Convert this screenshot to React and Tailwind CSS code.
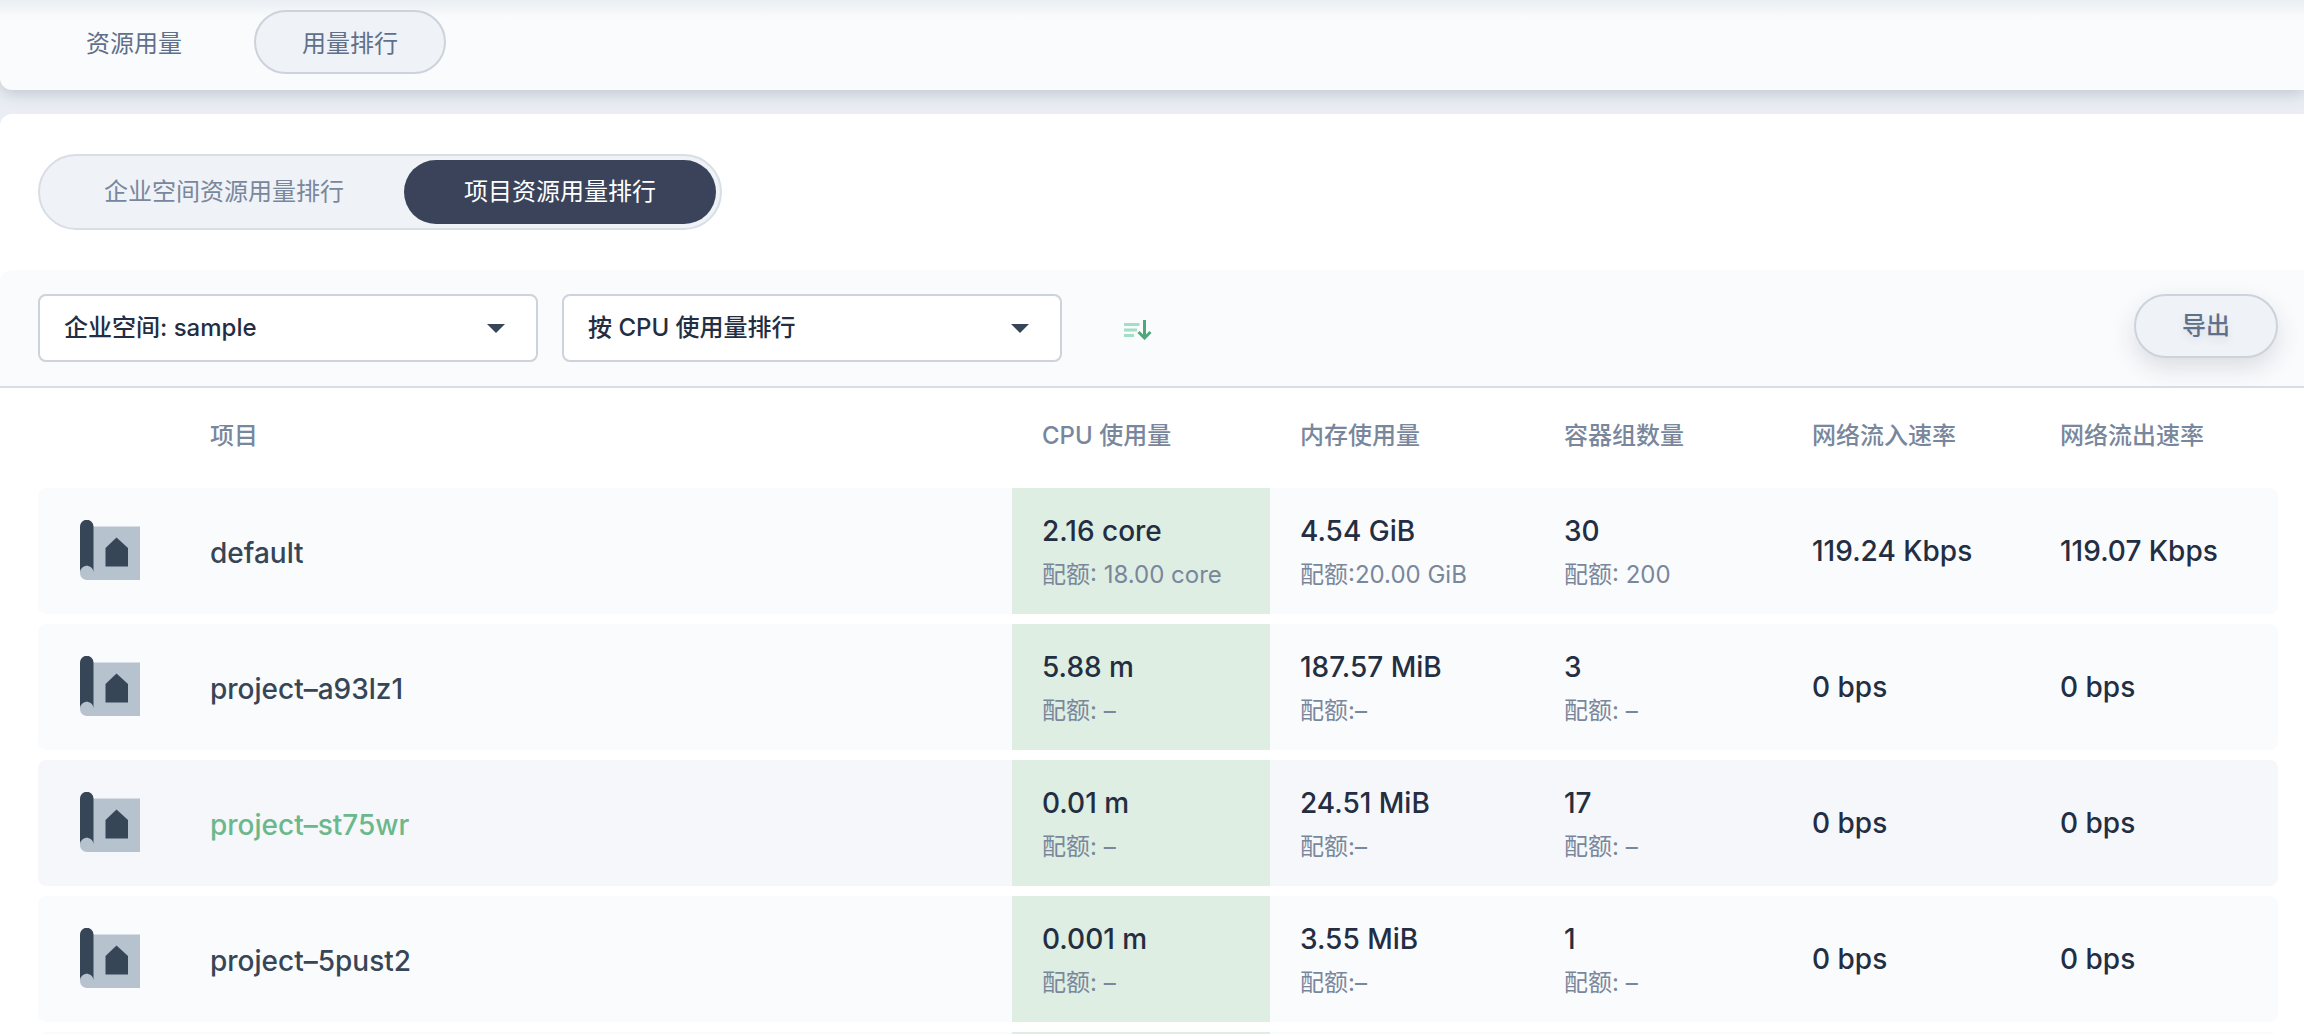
import React, { useState } from 'react';

const TABS = ['资源用量', '用量排行'];

const RANK_TYPES = ['企业空间资源用量排行', '项目资源用量排行'];

const METRICS = ['CPU 使用量', '内存使用量', '容器组数量', '网络流入速率', '网络流出速率'];

const PROJECTS = [
  {
    name: 'default',
    cpu: '2.16 core',
    cpuQuota: ' 18.00 core',
    memory: '4.54 GiB',
    memoryQuota: '20.00 GiB',
    pods: '30',
    podsQuota: ' 200',
    netIn: '119.24 Kbps',
    netOut: '119.07 Kbps',
  },
  {
    name: 'project–a93lz1',
    cpu: '5.88 m',
    cpuQuota: ' –',
    memory: '187.57 MiB',
    memoryQuota: '–',
    pods: '3',
    podsQuota: ' –',
    netIn: '0 bps',
    netOut: '0 bps',
  },
  {
    name: 'project–st75wr',
    active: true,
    cpu: '0.01 m',
    cpuQuota: ' –',
    memory: '24.51 MiB',
    memoryQuota: '–',
    pods: '17',
    podsQuota: ' –',
    netIn: '0 bps',
    netOut: '0 bps',
  },
  {
    name: 'project–5pust2',
    cpu: '0.001 m',
    cpuQuota: ' –',
    memory: '3.55 MiB',
    memoryQuota: '–',
    pods: '1',
    podsQuota: ' –',
    netIn: '0 bps',
    netOut: '0 bps',
  },
];

const ProjectIcon = () => (
  <svg className="block size-[60px]" viewBox="0 0 60 60" aria-hidden="true">
    <path fill="#b6c2cd" d="M13 6.5h47V60H7a7 7 0 0 1-7-7V46h13z" />
    <path fill="#364656" d="M0 6.5a6.5 6.5 0 0 1 13.5 0V53a6.75 6.75 0 0 0-13.5-1z" />
    <path fill="#364656" d="M25.5 28 36.5 17.5 48 28v18.5H25.5z" />
  </svg>
);

const SortIcon = () => (
  <svg className="block h-5 w-7" viewBox="0 0 28 20" fill="none" aria-hidden="true">
    <path stroke="#a2dfc4" strokeWidth="3" d="M0 4.5h15.5M0 10h13M0 15.5h10" />
    <path stroke="#4ca97a" strokeWidth="3" d="M20.5 0v17M14.5 12l6 6 6-6" />
  </svg>
);

const Select = ({ label, children }) => (
  <div className="relative w-[500px]">
    <select
      aria-label={label}
      className="h-[68px] w-full appearance-none rounded-lg border-2 border-[#ccd3db] bg-white px-6 text-2xl font-medium text-[#242e42] outline-none"
    >
      {children}
    </select>
    <svg
      className="pointer-events-none absolute right-[33px] top-[30px] h-[9px] w-[18px]"
      viewBox="0 0 18 9"
      aria-hidden="true"
    >
      <path fill="#364656" d="M0 0h18L9 9z" />
    </svg>
  </div>
);

const Metric = ({ value, quota, highlight }) => (
  <td className={`px-[30px] ${quota ? 'pt-1' : ''} ${highlight ? 'bg-[#deeee3]' : ''}`}>
    <p className="text-[28px] font-medium leading-10 text-[#242e42]">{value}</p>
    {quota && <p className="mt-1 text-2xl leading-10 text-[#79879c]">配额:{quota}</p>}
  </td>
);

const App = () => {
  const [tab, setTab] = useState(TABS[1]);
  const [rankType, setRankType] = useState(RANK_TYPES[1]);

  return (
    <div className="h-screen overflow-hidden bg-[#eaeef4] font-['Inter','Noto_Sans_CJK_SC',sans-serif]">
      <nav className="flex h-[90px] gap-6 rounded-bl-xl bg-[#fafbfd] bg-linear-to-b from-[#eaeef2] to-[#fafbfd] to-[18px] pl-[38px] pt-[10px] shadow-[0_4px_16px_rgba(36,46,66,0.2)]">
        {TABS.map((name) => (
          <button
            key={name}
            type="button"
            onClick={() => setTab(name)}
            className={`h-16 rounded-full border-2 px-[46px] pt-1 text-2xl text-[#5f708a] ${
              name === tab ? 'border-[#ccd3db] bg-[#eff2f7]' : 'border-transparent'
            }`}
          >
            {name}
          </button>
        ))}
      </nav>

      <main className="mt-6 rounded-tl-xl bg-white pt-10">
        <div className="ml-[38px] flex w-fit rounded-full border-2 border-[#d8dee5] bg-[#eff2f7] p-1">
          {RANK_TYPES.map((name) => (
            <button
              key={name}
              type="button"
              onClick={() => setRankType(name)}
              className={`h-16 rounded-full px-[60px] text-2xl ${
                name === rankType ? 'bg-[#3a435a] text-white' : 'text-[#79879c]'
              }`}
            >
              {name}
            </button>
          ))}
        </div>

        <div className="mt-10 flex items-start gap-6 rounded-tl-xl border-b-2 border-[#d8dee5] bg-[#fafbfd] py-6 pl-[38px] pr-[26px]">
          <Select label="企业空间">
            <option>企业空间: sample</option>
          </Select>
          <Select label="排行方式">
            <option>按 CPU 使用量排行</option>
          </Select>
          <button type="button" aria-label="排序" className="flex h-[68px] w-[104px] items-center justify-center pt-1">
            <SortIcon />
          </button>
          <button
            type="button"
            className="ml-auto h-16 rounded-full border-2 border-[#ccd3db] bg-[#eff2f7] px-[46px] text-2xl font-medium text-[#5f708a] shadow-[0_10px_24px_rgba(36,46,66,0.14)] text-shadow-[0_4px_8px_rgba(36,46,66,0.1)]"
          >
            导出
          </button>
        </div>

        <div className="pl-[38px] pr-[26px]">
          <table className="w-full table-fixed border-separate border-spacing-x-0 border-spacing-y-[10px] text-left">
            <thead>
              <tr className="h-20 text-2xl text-[#79879c]">
                <th className="w-[142px]" aria-label="图标" />
                <th className="px-[30px] pb-1 font-medium">项目</th>
                <th className="w-[258px] px-[30px] pb-1 font-medium">{METRICS[0]}</th>
                <th className="w-[264px] px-[30px] pb-1 font-medium">{METRICS[1]}</th>
                {METRICS.slice(2).map((name) => (
                  <th key={name} className="w-[248px] px-[30px] pb-1 font-medium">
                    {name}
                  </th>
                ))}
              </tr>
            </thead>
            <tbody>
              {PROJECTS.map((project) => (
                <tr
                  key={project.name}
                  className={`h-[126px] *:first:rounded-l-lg *:last:rounded-r-lg ${
                    project.active ? '*:bg-[#f5f7fa]' : '*:bg-[#fafbfd]'
                  } *:nth-3:bg-[#deeee3]`}
                >
                  <td className="pb-0.5 pl-[42px]">
                    <ProjectIcon />
                  </td>
                  <td className="px-[30px] pt-1 text-[28px] font-medium leading-10">
                    <a href="#" className={project.active ? 'text-[#6bb88c]' : 'text-[#364656]'}>
                      {project.name}
                    </a>
                  </td>
                  <Metric value={project.cpu} quota={project.cpuQuota} highlight />
                  <Metric value={project.memory} quota={project.memoryQuota} />
                  <Metric value={project.pods} quota={project.podsQuota} />
                  <Metric value={project.netIn} />
                  <Metric value={project.netOut} />
                </tr>
              ))}
              <tr className="h-[126px]">
                <td colSpan={2} className="rounded-l-lg bg-[#fafbfd]" />
                <td className="bg-[#deeee3]" />
                <td colSpan={4} className="rounded-r-lg bg-[#fafbfd]" />
              </tr>
            </tbody>
          </table>
        </div>
      </main>
    </div>
  );
};

export default App;
